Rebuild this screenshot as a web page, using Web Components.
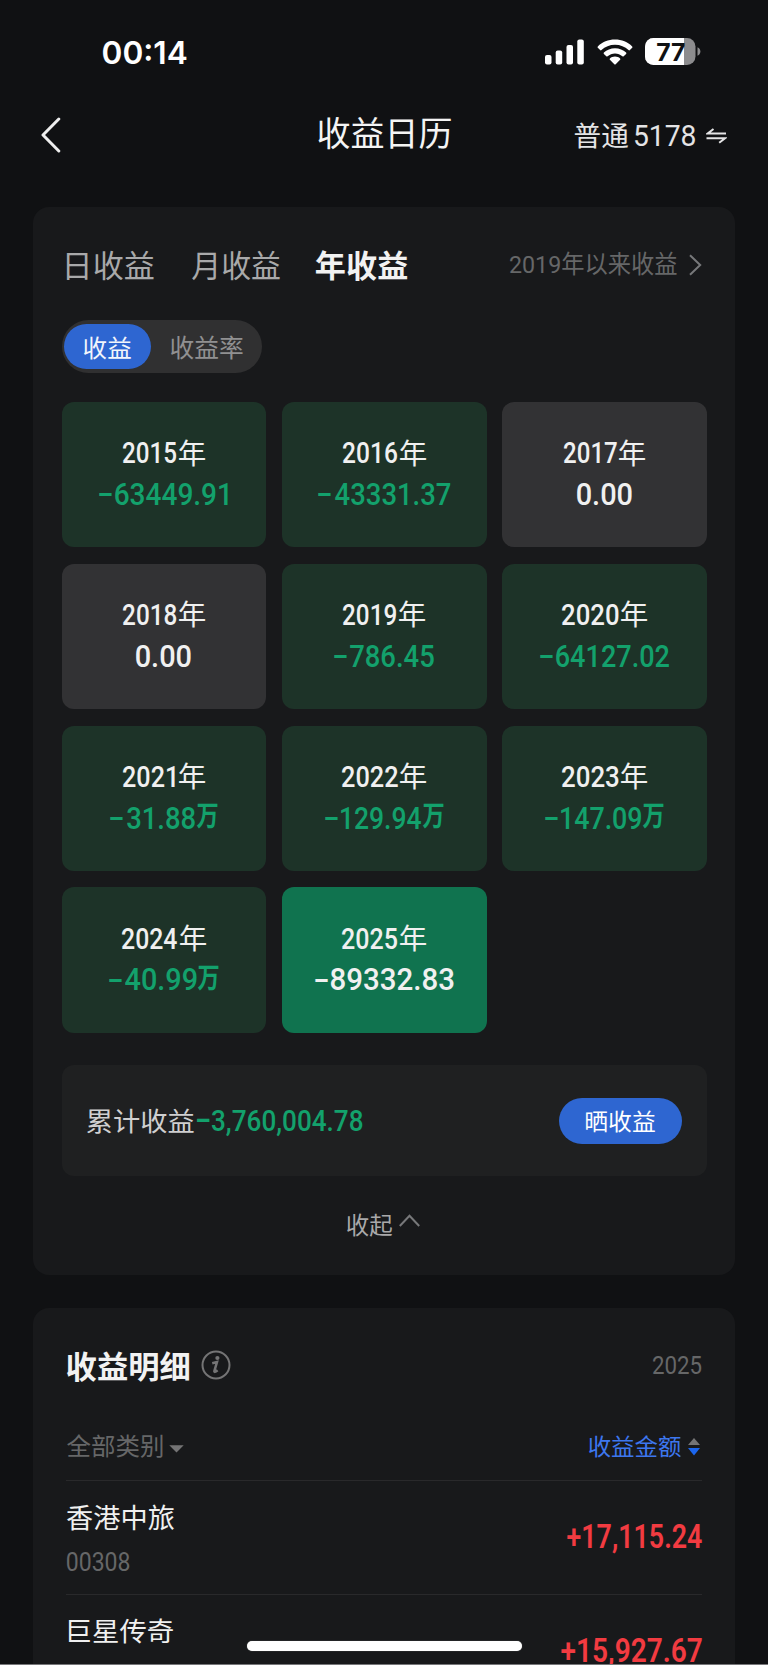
<!DOCTYPE html>
<html lang="zh-CN">
<head>
<meta charset="utf-8">
<title>收益日历</title>
<style>
html,body{margin:0;padding:0;background:#101113}
body{font-family:Roboto,"Noto Sans CJK SC",sans-serif;color:#eee;width:768px;height:1665px;overflow:hidden}
</style>
</head>
<body>
<profit-app></profit-app>
<script>
const FAMILY = 'Roboto, "Noto Sans CJK SC", sans-serif';
const pen = document.createElement('canvas').getContext('2d');

// A label whose box is the drawn extent of its text, stretched to w (and h when given).
class FitText extends HTMLElement {
  connectedCallback() {
    if (this.shadowRoot) return;
    const a = (n, d) => this.getAttribute(n) || d;
    const size = +a('size', 24), weight = a('weight', 400), family = a('family', FAMILY);
    // Ink extents are rounded to whole pixels, so they are read at eight times the size.
    pen.font = `${weight} ${size * 8}px ${family}`;
    const big = pen.measureText(this.textContent);
    const left = big.actualBoundingBoxLeft / 8, right = big.actualBoundingBoxRight / 8;
    const up = big.actualBoundingBoxAscent / 8, down = big.actualBoundingBoxDescent / 8;
    pen.font = `${weight} ${size}px ${family}`;
    const m = pen.measureText(this.textContent);
    const iw = left + right, ih = up + down;
    const w = +a('w', iw), h = +a('h', ih);
    const sx = w / iw, sy = h / ih;
    const base = size / 2 + (m.fontBoundingBoxAscent - m.fontBoundingBoxDescent) / 2;
    const tx = left * sx;
    const ty = (up - base) * sy;
    this.attachShadow({mode: 'open'}).innerHTML = `<style>
      :host{display:inline-block;vertical-align:middle;flex:none;width:${w}px;height:${h}px;color:${a('color', 'inherit')}}
      span{display:block;width:max-content;white-space:pre;font:${weight} ${size}px/${size}px ${family};
        transform-origin:0 0;transform:translate(${tx}px,${ty}px) scale(${sx},${sy})}
    </style><span><slot></slot></span>`;
  }
}

class StatusBar extends HTMLElement {
  constructor() {
    super();
    this.attachShadow({mode: 'open'}).innerHTML = `<style>
      :host{display:flex;align-items:center;justify-content:space-between;height:103px;padding:0 67px 0 102.500px;box-sizing:border-box}
      svg{display:block}
      .right{display:flex;align-items:center}
      .bat{position:relative;width:56px;height:27px;margin-left:12px}
      .bat fit-text{position:absolute;left:11.500px;top:4.700px}
    </style>
    <fit-text style="margin-top:2px" w="83.500" h="24" size="33" weight="600" family="Inter, sans-serif" color="#fff">00:14</fit-text>
    <div class="right">
      <svg width="39" height="26" viewBox="0 0 39 26" fill="#fff"><rect x="0" y="16" width="6.5" height="9.5" rx="2"/><rect x="10.7" y="11.500" width="6.500" height="14" rx="2"/><rect x="21.500" y="6" width="6.500" height="19.500" rx="2"/><rect x="32.300" y="0.500" width="6.500" height="25" rx="2"/></svg>
      <svg style="margin-left:13px" width="36" height="26" viewBox="0 0 36 26" fill="#fff"><path d="M18 .6C11.300 .6 5.200 3.200 .8 7.400c-.4.4-.4 1 0 1.400l2.300 2.300c.4.4 1 .4 1.400 0C8 7.800 12.700 5.800 18 5.800s10 2 13.500 5.300c.4.4 1 .4 1.400 0l2.300-2.300c.4-.4.4-1 0-1.400C30.800 3.200 24.700.6 18 .6z"/><path d="M18 9.200c-4.300 0-8.200 1.600-11.100 4.300-.4.4-.4 1 0 1.400l2.400 2.400c.4.4.9.400 1.300 0 2-1.800 4.600-2.900 7.400-2.900s5.400 1.100 7.400 2.900c.4.4.9.4 1.300 0l2.400-2.400c.4-.4.4-1 0-1.400C26.200 10.800 22.300 9.200 18 9.200z"/><path d="M18 17.600c-2 0-3.800.7-5.100 1.900-.4.4-.4.9 0 1.300l4.400 4.400c.4.4 1 .4 1.400 0l4.400-4.400c.4-.4.4-.9 0-1.300-1.300-1.200-3.100-1.900-5.100-1.900z"/></svg>
      <div class="bat">
        <svg width="56" height="27" viewBox="0 0 56 27"><defs><clipPath id="b"><rect width="50.500" height="27" rx="8.500"/></clipPath></defs><g clip-path="url(#b)"><rect width="51" height="27" fill="#8c8c8e"/><rect width="39" height="27" fill="#fff"/></g><path d="M52.500 9.300c1.900.8 2.900 2.400 2.900 4.200s-1 3.500-2.900 4.200z" fill="#8c8c8e"/></svg>
        <fit-text w="27.500" h="18" size="25" weight="700" family="Inter, sans-serif" color="#101113">77</fit-text>
      </div>
    </div>`;
  }
}

class NavBar extends HTMLElement {
  constructor() {
    super();
    this.attachShadow({mode: 'open'}).innerHTML = `<style>
      :host{display:grid;grid-template-columns:1fr auto 1fr;align-items:center;height:64px;padding:0 41px}
      .right{display:flex;align-items:center;justify-content:flex-end;color:#e4e4e5}
    </style>
    <svg width="20" height="36" viewBox="0 0 20 36" fill="none" stroke="#eee" stroke-width="3" stroke-linecap="round" stroke-linejoin="round"><path d="M17.800 2 2 18l15.800 16"/></svg>
    <fit-text style="margin-top:-2px" w="133" h="31.500" size="34" weight="400" color="#f4f4f4">收益日历</fit-text>
    <div class="right">
      <fit-text style="margin-top:1px" w="53" h="25.500" size="27">普通</fit-text>
      <fit-text style="margin:2px 0 0 7px" w="60" h="21" size="29" weight="400">5178</fit-text>
      <svg style="margin:1px 0 0 11px" width="21" height="16" viewBox="0 0 21 16" fill="none" stroke="#e4e4e5" stroke-width="2"><path d="M7.500 1 1.500 5.600H20M.5 10.200h18.700l-6 4.600"/></svg>
    </div>`;
  }
}

class YearTile extends HTMLElement {
  connectedCallback() {
    if (this.shadowRoot) return;
    const g = n => this.getAttribute(n) || '';
    const tone = g('tone') || 'loss';
    const [, sign, num, unit] = g('value').match(/^(-?)([\d.]+)(万?)$/);
    let nw = +g('vw');
    let value = '';
    if (sign) { value += '<fit-text class="sign" w="13.3" h="3.4" size="33" weight="500">-</fit-text>'; nw -= 16.300; }
    if (unit) nw -= 22.5;
    value += `<fit-text w="${nw}" h="24" size="33" weight="500">${num}</fit-text>`;
    if (unit) value += '<fit-text class="unit" w="20.5" h="25" size="28" weight="700">万</fit-text>';
    // A trailing 1 is narrower than the other digits and leaves a wider gap.
    const gap = g('year').endsWith('1') ? 4.6 : 2.8;
    const yw = +g('yw') - 26 - gap;
    this.attachShadow({mode: 'open'}).innerHTML = `<style>
      :host{display:block;border-radius:12px;text-align:center;padding-top:38.700px;box-sizing:border-box;
        background:${{loss: '#1d3328', flat: '#323234', now: '#10734f'}[tone]}}
      div{height:27px;line-height:27px;font-size:0;white-space:nowrap}
      .v{margin-top:12.300px;height:26.500px;line-height:26.500px;color:${tone === 'loss' ? '#13a16c' : '#f0f0f0'}}
      .y{color:#f0f0f0}
      .nian{margin-left:${gap}px}
      .sign{margin-right:3px;position:relative;top:2px}
      .unit{margin-left:2px}
    </style>
    <div class="y"><fit-text w="${yw}" h="21" size="29" weight="500">${g('year')}</fit-text><fit-text class="nian" w="26" h="26.400" size="28">年</fit-text></div>
    <div class="v">${value}</div>`;
  }
}

class ProfitCalendar extends HTMLElement {
  constructor() {
    super();
    this.attachShadow({mode: 'open'}).innerHTML = `<style>
      :host{display:block;background:#18191b;border-radius:16px;height:1068px;padding:29px 28.200px 0 28.500px;box-sizing:border-box}
      .tabs{display:flex;align-items:center;height:59px;padding:0 4.800px 0 5.400px;color:#a9a9aa}
      .since{margin-left:auto;display:flex;align-items:center;color:#666768}
      .seg{display:flex;align-items:center;width:200.500px;height:53.500px;border-radius:27px;background:#303031;margin-top:24.700px;box-sizing:border-box;padding-left:2.700px}
      .on{display:flex;align-items:center;justify-content:center;width:87px;height:45.500px;border-radius:23px;background:#2e66d1;color:#f2f5fc}
      .grid{display:grid;grid-template-columns:repeat(3,204.700px);justify-content:space-between;grid-auto-rows:145.500px;row-gap:16.300px;margin-top:28.500px}
      .sum{display:flex;align-items:center;height:111px;border-radius:12px;background:#1f2021;margin-top:32.500px;padding:0 24.400px 0 25.700px;box-sizing:border-box}
      .sum .btn{margin-left:auto;display:flex;align-items:center;justify-content:center;width:123.300px;height:45.300px;border-radius:23px;background:#2e66d1}
      .fold{display:flex;justify-content:center;align-items:center;height:22px;margin-top:38px;padding-right:1.500px}
    </style>
    <div class="tabs">
      <fit-text w="86.500" h="29" size="30">日收益</fit-text>
      <fit-text style="margin-left:38.500px" w="87.700" h="29" size="30">月收益</fit-text>
      <fit-text style="margin-left:36px" w="91" h="29.300" size="31" weight="700" color="#f2f2f2">年收益</fit-text>
      <div class="since"><fit-text style="margin-top:-4px" w="166.700" h="23" size="25" weight="400">2019年以来收益</fit-text>
      <svg style="margin:-1px 0 0 12.500px" width="13" height="22" viewBox="0 0 13 22" fill="none" stroke="#77787a" stroke-width="2"><path d="M1 1.200 11.200 11 1 20.800"/></svg></div>
    </div>
    <div class="seg"><div class="on"><fit-text style="margin-top:2.500px" w="46.700" h="22.500" size="24">收益</fit-text></div><fit-text style="margin:2.500px 0 0 20px" w="71.700" h="23" size="24" color="#909091">收益率</fit-text></div>
    <div class="grid">
      <year-tile year="2015" yw="82" value="-63449.91" vw="129.300"></year-tile>
      <year-tile year="2016" yw="82.700" value="-43331.37" vw="131.700"></year-tile>
      <year-tile year="2017" yw="81.500" value="0.00" vw="55" tone="flat"></year-tile>
      <year-tile year="2018" yw="82" value="0.00" vw="55" tone="flat"></year-tile>
      <year-tile year="2019" yw="81.700" value="-786.45" vw="100"></year-tile>
      <year-tile year="2020" yw="85" value="-64127.02" vw="129.300"></year-tile>
      <year-tile year="2021" yw="82" value="-31.88万" vw="107"></year-tile>
      <year-tile year="2022" yw="84.500" value="-129.94万" vw="118.700"></year-tile>
      <year-tile year="2023" yw="85.200" value="-147.09万" vw="119"></year-tile>
      <year-tile year="2024" yw="83.700" value="-40.99万" vw="110.300"></year-tile>
      <year-tile year="2025" yw="83.700" value="-89332.83" vw="138.700" tone="now"></year-tile>
    </div>
    <div class="sum">
      <fit-text style="margin-top:1px" w="106.700" h="24.500" size="27" color="#cfcfd0">累计收益</fit-text>
      <fit-text style="margin:2px 3px 0 3px" w="12.500" h="3.200" size="30" weight="500" color="#13a16c">-</fit-text>
      <fit-text style="margin-top:4px" w="150.300" h="26" size="30" weight="500" color="#13a16c">3,760,004.78</fit-text>
      <div class="btn"><fit-text style="margin-top:-1px" w="68.700" h="21.500" size="24" color="#fff">晒收益</fit-text></div>
    </div>
    <div class="fold">
      <fit-text w="45" h="22" size="24" color="#a9a9aa">收起</fit-text>
      <svg style="margin:-10px 0 0 7px" width="21" height="13" viewBox="0 0 21 13" fill="none" stroke="#77787a" stroke-width="2"><path d="M.8 12 10.500 1.800 20.200 12"/></svg>
    </div>`;
  }
}

class HoldingRow extends HTMLElement {
  constructor() {
    super();
    this.attachShadow({mode: 'open'}).innerHTML = `<style>
      :host{display:flex;justify-content:space-between;align-items:flex-start;height:114px;border-top:1px solid #29292b;box-sizing:border-box}
      .l{display:flex;flex-direction:column;align-items:flex-start;padding:24px 0 0 1px;gap:23px;color:#f0f0f0}
      .r{padding-top:42.700px;color:#f23b41;line-height:0}
    </style><div class="l"><slot></slot></div><div class="r"><slot name="amount"></slot></div>`;
  }
}

class ProfitDetail extends HTMLElement {
  constructor() {
    super();
    this.attachShadow({mode: 'open'}).innerHTML = `<style>
      :host{display:block;background:#18191b;border-radius:16px 16px 0 0;height:357.300px;padding:29px 33px 0;box-sizing:border-box;margin-top:32.500px}
      .head{display:flex;align-items:center;height:58px;padding-left:1.300px}
      .filter{display:flex;align-items:center;height:68px;padding:17px 1px 16px;box-sizing:border-box;margin-top:17px}
      .push{margin-left:auto}
    </style>
    <div class="head">
      <fit-text style="margin-top:1px" w="122" h="29" size="31" weight="700" color="#f2f2f2">收益明细</fit-text>
      <svg style="margin:-1px 0 0 11.500px" width="30" height="30" viewBox="0 0 30 30"><circle cx="15" cy="15" r="13.500" fill="none" stroke="#747475" stroke-width="2"/><circle cx="16.400" cy="8" r="2.100" fill="#747475"/><path d="M11.200 13.300l4.800-1.200-2.600 8.800c-.4 1.500.9 1.300 3.200-.6" fill="none" stroke="#747475" stroke-width="2.500"/></svg>
      <fit-text class="push" style="margin:-2px .5px 0 auto" w="48.300" h="18.500" size="26" color="#666768">2025</fit-text>
    </div>
    <div class="filter">
      <fit-text style="margin-top:-1px" w="95.300" h="23" size="25" color="#666768">全部类别</fit-text>
      <svg style="margin:5px 0 0 7px" width="15" height="8" viewBox="0 0 15 8"><path d="M.3.3h14.400L7.500 7.500z" fill="#747475"/></svg>
      <fit-text class="push" w="91.800" h="21.500" size="24" color="#3d77ef">收益金额</fit-text>
      <svg style="margin:1px 1px 0 7.500px" width="12" height="18" viewBox="0 0 12 18"><path d="M6 0 12 7H0z" fill="#747475"/><path d="M0 10h12L6 17.500z" fill="#1c66ee"/></svg>
    </div>
    <holding-row>
      <fit-text w="107" h="25.300" size="27">香港中旅</fit-text>
      <fit-text w="62.300" h="18.300" size="26" color="#666768">00308</fit-text>
      <fit-text slot="amount" w="134.700" h="30.500" size="35" weight="600">+17,115.24</fit-text>
    </holding-row>
    <holding-row>
      <fit-text style="margin-left:2px" w="104" h="24.500" size="27">巨星传奇</fit-text>
      <fit-text slot="amount" w="140.700" h="30.500" size="35" weight="600">+15,927.67</fit-text>
    </holding-row>`;
  }
}

class ProfitApp extends HTMLElement {
  constructor() {
    super();
    this.attachShadow({mode: 'open'}).innerHTML = `<style>
      :host{display:block;position:relative;width:768px;height:1665px;overflow:hidden;background:#101113}
      main{padding:40.300px 33px 0}
      .home{position:absolute;left:246.500px;top:1641px;width:275px;height:9.500px;border-radius:5px;background:#fff;box-shadow:0 0 1px #fff8}
      .edge{position:absolute;left:0;right:0;bottom:0;height:1px;background:#77777a}
    </style>
    <status-bar></status-bar>
    <nav-bar></nav-bar>
    <main><profit-calendar></profit-calendar><profit-detail></profit-detail></main>
    <div class="home"></div><div class="edge"></div>`;
  }
}

customElements.define('fit-text', FitText);
customElements.define('status-bar', StatusBar);
customElements.define('nav-bar', NavBar);
customElements.define('year-tile', YearTile);
customElements.define('profit-calendar', ProfitCalendar);
customElements.define('holding-row', HoldingRow);
customElements.define('profit-detail', ProfitDetail);
customElements.define('profit-app', ProfitApp);
</script>
</body>
</html>
